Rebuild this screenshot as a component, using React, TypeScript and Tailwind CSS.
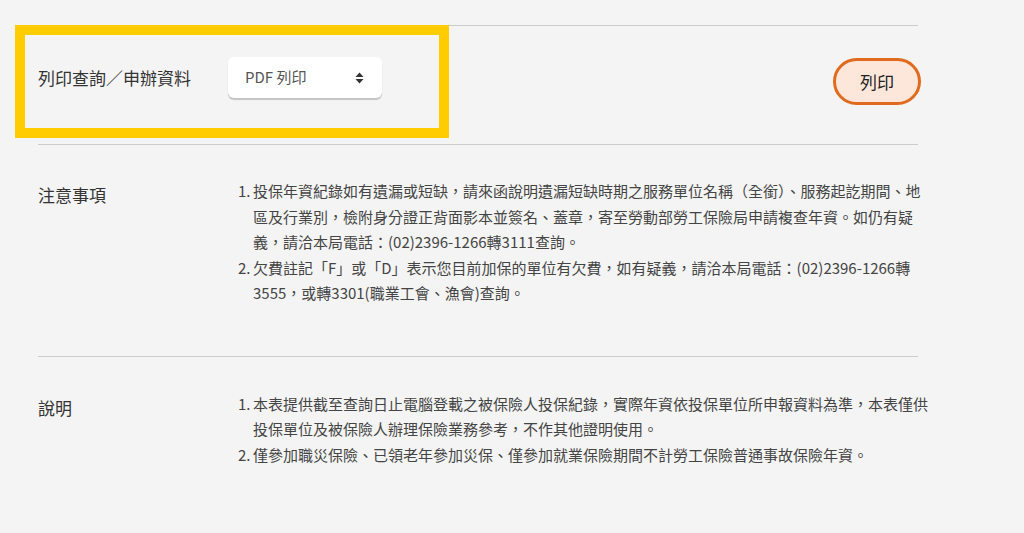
const notes = [
  '投保年資紀錄如有遺漏或短缺，請來函說明遺漏短缺時期之服務單位名稱（全銜）、服務起訖期間、地區及行業別，檢附身分證正背面影本並簽名、蓋章，寄至勞動部勞工保險局申請複查年資。如仍有疑義，請洽本局電話：(02)2396-1266轉3111查詢。',
  '欠費註記「F」或「D」表示您目前加保的單位有欠費，如有疑義，請洽本局電話：(02)2396-1266轉3555，或轉3301(職業工會、漁會)查詢。',
];

const explains = [
  '本表提供截至查詢日止電腦登載之被保險人投保紀錄，實際年資依投保單位所申報資料為準，本表僅供投保單位及被保險人辦理保險業務參考，不作其他證明使用。',
  '僅參加職災保險、已領老年參加災保、僅參加就業保險期間不計勞工保險普通事故保險年資。',
];

const NumberedList = ({ items, textWidth }: { items: string[]; textWidth: string }) => (
  <ol className="flex-none text-[15px] leading-[25.5px] text-[#444]">
    {items.map((item, i) => (
      <li key={i} className="flex">
        <span className="w-[15px] shrink-0">{i + 1}.</span>
        <span className={textWidth}>{item}</span>
      </li>
    ))}
  </ol>
);

const SortIcon = () => (
  <svg width="9" height="12" viewBox="0 0 9 12" className="text-[#333]">
    <path d="M4.5 0.5 L8.5 5 H0.5 Z" fill="currentColor" />
    <path d="M4.5 11.5 L8.5 7 H0.5 Z" fill="currentColor" />
  </svg>
);

const App = () => {
  return (
    <div
      className="min-h-screen bg-[#f4f4f4] pt-[25px]"
      style={{ fontFamily: '"Noto Sans CJK TC", "Noto Sans", sans-serif' }}
    >
      <div className="ml-[38px] w-[880px]">
        {/* Print row */}
        <div className="relative flex h-[120px] items-start justify-between border-y border-[#cccccc] pt-[31px]">
          <div className="flex items-center">
            <span className="w-[190px] text-[17px] text-[#333]">列印查詢／申辦資料</span>
            <div className="flex h-[41px] w-[154px] items-center justify-between rounded-md bg-white pl-[17px] pr-[18px] shadow-[0_2px_1px_rgba(0,0,0,0.2)]">
              <span className="text-[15px] text-[#555]">PDF 列印</span>
              <SortIcon />
            </div>
          </div>
          <button className="-mr-[3px] mt-px flex h-[47px] w-[88px] items-center justify-center rounded-full border-[3px] border-[#e06b1e] bg-[#fde7da] text-[17px] text-[#222]">
            列印
          </button>
          {/* highlight frame */}
          <div className="absolute -left-[23px] -top-px h-[113px] w-[434px] border-[10px] border-[#ffcc00]" />
        </div>

        {/* Notes */}
        <div className="flex border-b border-[#cccccc] pt-[33px] pb-[50px]">
          <div className="w-[200px] shrink-0 pt-[4px] text-[17px] text-[#333]">注意事項</div>
          <NumberedList items={notes} textWidth="w-[670px]" />
        </div>

        {/* Explanation */}
        <div className="flex pt-[34px]">
          <div className="w-[200px] shrink-0 pt-[4px] text-[17px] text-[#333]">說明</div>
          <NumberedList items={explains} textWidth="w-[676px]" />
        </div>
      </div>
    </div>
  );
};

export default App;
